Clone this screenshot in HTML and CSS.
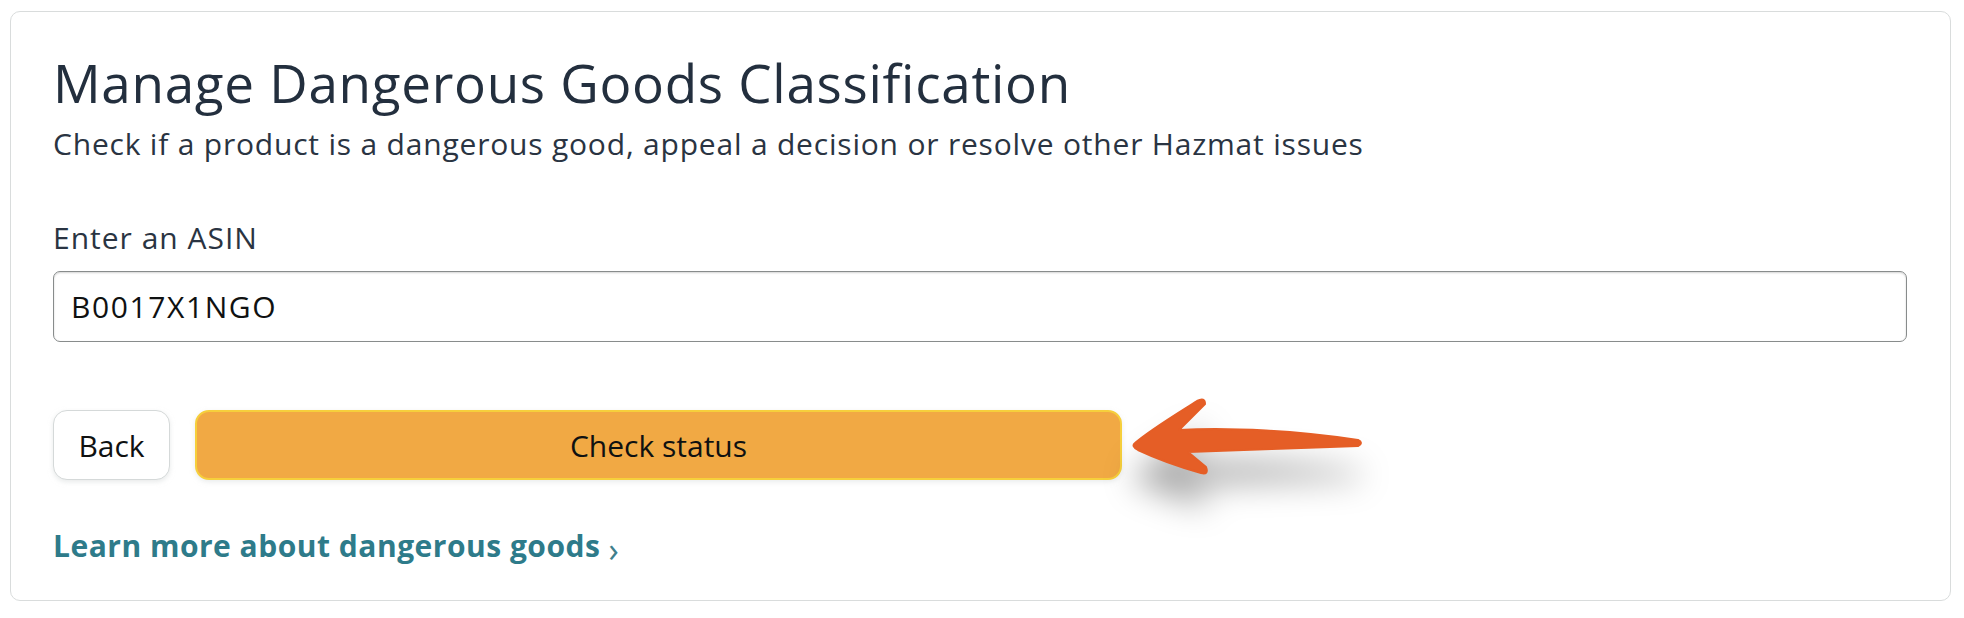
FILE: index.html
```html
<!DOCTYPE html>
<html lang="en">
<head>
<meta charset="utf-8">
<title>Manage Dangerous Goods Classification</title>
<link rel="stylesheet" href="styles.css">
</head>
<body>
<main class="card">
  <h1 class="title">Manage Dangerous Goods Classification</h1>
  <p class="subtitle">Check if a product is a dangerous good, appeal a decision or resolve other Hazmat issues</p>
  <label class="label" for="asin">Enter an ASIN</label>
  <input class="input" id="asin" type="text" value="B0017X1NGO">
  <div class="actions">
    <button class="btn btn-back" type="button">Back</button>
    <button class="btn btn-primary" type="button">Check status</button>
  </div>
  <a class="link" href="#">Learn more about dangerous goods<span class="chev">›</span></a>
</main>
<svg class="arrow" width="260" height="110" viewBox="0 0 260 110" aria-hidden="true">
  <path d="M15,58 C30,45 55,30 77,16 Q85,12 85,19 L59,45 C110,42 180,46 238,55 Q244,58 238,61 C180,63 120,65 68,67 L86,82 Q89,90 81,88 C60,82 35,73 18,65 Q11,61 15,58 Z" fill="#e55e26" stroke="#e55e26" stroke-width="2" stroke-linejoin="round"/>
</svg>
</body>
</html>
```

FILE: styles.css
```css
html, body {
  margin: 0;
  padding: 0;
  background: #ffffff;
}

body {
  position: relative;
  font-family: "Open Sans", "Noto Sans", Arial, sans-serif;
  color: #232f3e;
}

.card {
  display: flex;
  flex-direction: column;
  align-items: flex-start;
  box-sizing: border-box;
  width: 1941px;
  margin: 11px 0 0 10px;
  padding: 41px 43px 36px 42px;
  border: 1px solid #d9dcdc;
  border-radius: 10px;
  background: #ffffff;
}

.title {
  margin: 0;
  font-size: 53px;
  line-height: 60px;
  font-weight: 400;
  color: #232f3e;
  letter-spacing: 0.7px;
}

.subtitle {
  margin: 13px 0 0;
  font-size: 30px;
  line-height: 36px;
  color: #2a3442;
  letter-spacing: 0.8px;
}

.label {
  margin-top: 58px;
  font-size: 30px;
  line-height: 36px;
  color: #2a3442;
  letter-spacing: 1px;
}

.input {
  box-sizing: border-box;
  width: 100%;
  height: 71px;
  margin-top: 15px;
  padding: 0 17px;
  border: 1px solid #888c8c;
  border-radius: 7px;
  box-shadow: inset 0 1px 2px rgba(15, 17, 17, 0.18);
  font-family: "Open Sans", "Noto Sans", Arial, sans-serif;
  font-size: 30px;
  letter-spacing: 1.6px;
  color: #0f1111;
  background: #fff;
  outline: none;
}

.actions {
  display: flex;
  gap: 25px;
  margin-top: 68px;
}

.btn {
  box-sizing: border-box;
  height: 70px;
  border-radius: 14px;
  font-family: "Open Sans", "Noto Sans", Arial, sans-serif;
  font-size: 30px;
  color: #0f1111;
  cursor: pointer;
}

.btn-back {
  width: 117px;
  padding: 0;
  border: 1px solid #d5d9d9;
  background: #ffffff;
  box-shadow: 0 2px 5px rgba(213, 217, 217, 0.55);
}

.btn-primary {
  width: 927px;
  border: 2px solid #f6cf3c;
  background: #f1a944;
  box-shadow: 0 2px 5px rgba(213, 217, 217, 0.5);
}

.link {
  margin-top: 46px;
  font-size: 30px;
  line-height: 36px;
  font-weight: 700;
  color: #2e7b8a;
  text-decoration: none;
  letter-spacing: 0.5px;
}

.chev {
  margin-left: 8px;
  font-size: 34px;
  font-weight: 400;
  color: #3f7f8d;
  position: relative;
  top: 5px;
}

.arrow {
  position: absolute;
  left: 1120px;
  top: 385px;
  overflow: visible;
  filter: drop-shadow(0 32px 16px rgba(0, 0, 0, 0.33));
}
```
